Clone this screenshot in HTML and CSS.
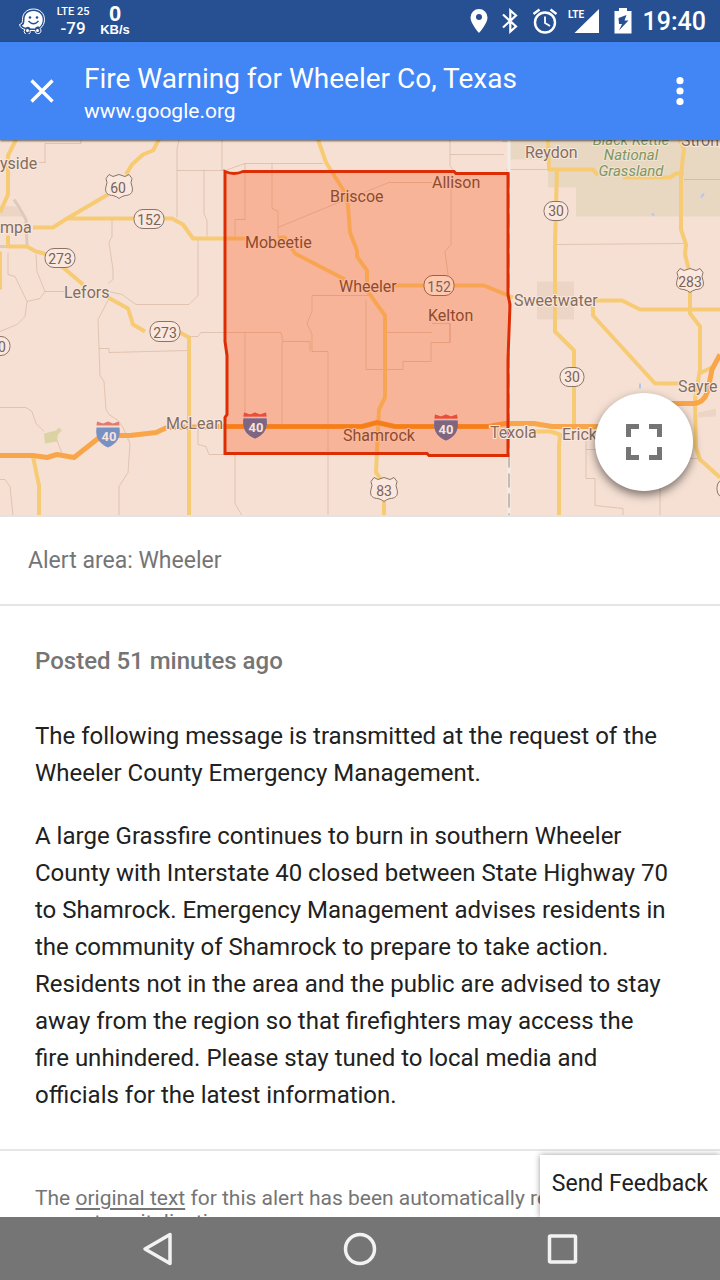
FILE: index.html
```html
<!DOCTYPE html>
<html lang="en">
<head>
<meta charset="utf-8">
<meta name="viewport" content="width=device-width, initial-scale=1">
<title>Fire Warning for Wheeler Co, Texas</title>
<link rel="stylesheet" href="styles.css">
</head>
<body>
<div class="status">
  <svg class="waze" viewBox="0 0 28 26" width="28" height="26">
    <path d="M15.500 1C8.500 1 4.500 5.500 4.500 11.500C4.500 14.500 4 16 1.500 16.500C2 19.500 4.500 21 7 21.500A3 3 0 1 0 12 22.500H17A3 3 0 1 0 22 20.500C25 18.500 26.500 15 26.500 11.500C26.500 5.500 22 1 15.500 1Z" fill="none" stroke="#fff" stroke-width="1"/>
    <path d="M15.500 3C9.500 3 6.500 7 6.500 11.500C6.500 15 6 17 4 17.500C5 19 6.500 19.500 8 19.500C10 18 11.500 19 12.500 20.500H17C18 18.500 20 18 21.500 19C23.500 17.500 24.700 14.500 24.700 11.500C24.700 7 21 3 15.500 3Z" fill="#fff"/>
    <circle cx="12" cy="9.500" r="1.300" fill="#265092"/><circle cx="19" cy="9.500" r="1.300" fill="#265092"/>
    <path d="M10.500 13Q15.500 18.500 20.500 13" fill="none" stroke="#265092" stroke-width="1.400"/>
    <circle cx="9.500" cy="22.500" r="1.500" fill="#fff"/><circle cx="19.500" cy="22.500" r="1.500" fill="#fff"/>
  </svg>
  <div class="signal"><span>LTE 25</span><b>-79</b></div>
  <div class="speed"><span>0</span><b>KB/s</b></div>
  <div class="status-icons">
    <svg viewBox="0 0 18 26" width="18" height="26"><path d="M9 1A8.500 8.500 0 0 0 .5 9.500C.5 15.500 9 25 9 25S17.500 15.500 17.500 9.500A8.500 8.500 0 0 0 9 1Z" fill="#fff"/><circle cx="9" cy="9" r="3" fill="#265092"/></svg>
    <svg viewBox="0 0 16 26" width="16" height="26"><path d="M1 6.500L14 18.500L8.300 23.500V2.500L14 7.500L1 19.500" fill="none" stroke="#fff" stroke-width="2.200"/></svg>
    <svg viewBox="0 0 26 26" width="26" height="26"><circle cx="13" cy="14.500" r="10" fill="none" stroke="#fff" stroke-width="2.400"/><path d="M13 8.500V15L18 18" fill="none" stroke="#fff" stroke-width="1.800"/><path d="M1.500 6L7.500 1.500M18.500 1.500L24.500 6" stroke="#fff" stroke-width="2.400"/></svg>
    <svg class="cell" viewBox="0 0 32 26" width="32" height="26"><path d="M31 1V25H6.500Z" fill="#fff"/><text x="0" y="10" class="lte">LTE</text></svg>
    <svg viewBox="0 0 18 26" width="18" height="26"><path d="M5 0H13V3H17.500V25.500H.5V3H5Z" fill="#fff"/><path d="M12.500 7L4.500 10L5 16H8L5 22.500L14.500 12.500H10.500Z" fill="#265092"/></svg>
  </div>
  <time class="clock">19:40</time>
</div>
<header class="bar">
  <button class="icon-button close" aria-label="Close"><svg viewBox="0 0 24 24" width="24" height="24"><path d="M1.500 1.500L22.500 22.500M22.500 1.500L1.500 22.500" stroke="#fff" stroke-width="3.400"/></svg></button>
  <div class="heading"><h1>Fire Warning for Wheeler Co, Texas</h1><p>www.google.org</p></div>
  <button class="icon-button more" aria-label="More options"><svg viewBox="0 0 8 28" width="8" height="28"><g fill="#fff"><circle cx="4" cy="3.700" r="3.600"/><circle cx="4" cy="14" r="3.600"/><circle cx="4" cy="24.500" r="3.600"/></g></svg></button>
</header>
<main class="page">
  <section class="map">
    <svg class="map-art" viewBox="0 140 720 376" preserveAspectRatio="xMidYMid slice" role="img" aria-label="Map of Wheeler County">
      <defs>
        <g id="interstate"><path d="M-11.500-7H11.500C13 3 9 9 0 13C-9 9-13 3-11.500-7Z" fill="#7890c2"/><path d="M-11-13L-5-11L0-13L5-11L11-13L11.500-9H-11.500Z" fill="#e5796f"/></g>
        <path id="us" d="M-10-12L-6-10L0-12L6-10L10-12L13-8Q11-4 13 0C15 7 10 9 6 9Q2 10 0 12Q-2 10-6 9C-10 9-15 7-13 0Q-11-4-13-8Z"/>
      </defs>
      <rect y="140" width="720" height="376" fill="#f6e0d4"/>
      <path d="M509 140H720V217H576V188H548V160H509Z" fill="#e8d8c2"/>
      <path d="M537 282H574V320H537ZM698 413L716 409V417L698 418ZM0 206L16 207L23 217H0Z" fill="#ecd5c5"/>
      <path d="M44 434L56 431L59 428L62 431L58 435L57 442L45 444Z" fill="#dcd3a5"/>
      <path d="M701 198L704 194M652 214L654 216M640 384V389" stroke="#b0c8ec" stroke-width="2"/>
      <g class="minor">
        <path d="M39 163H45V144H81V140M179 140L177 150V218M177 171H225M204 171V214L207 221V237M198 240V296L189 305H136L122 295L109 292M112 219V237L109 243L113 270V280L108 284M108 301L98 320L100 376L104 382L106 410L109 415L118 421L123 428L130 444L128 473L119 487V516M99 349H109V353L188 351M188 337H198L201 333H225M0 408H26L32 412L36 424L44 432M57 441L62 454M0 480H5L10 487L13 516M8 253V275L15 277L27 302L25 317L17 325L0 332M36 255L37 272L45 292H68M27 302L40 299L45 292M198 430V445L206 447L209 455H235V504L242 516M222 140V171"/>
        <path d="M225 171L245 164H323M245 164V220H235V237M272 164V209L278 212V237M278 228L336 204L389 183H432M450 140V166L454 172M450 155H504M451 190V245L445 252L448 275M312 296H372M312 296V312L307 324L312 335V352H328V362V516M225 333H281L283 342H310V352M245 333V420M282 342L282 430M366 300V370H403V362H431V343H450V324H432M386 333H432M450 324V343M509 142H502M506 170H548M556 245L684 244M684 180H720M586 440V479H595V506L623 509V516M660 485V516M586 450H610M690 459H700"/>
      </g>
      <path d="M0 247H27V245L26 220L18 206L14 200" class="ring"/>
      <path d="M509 140V516" class="state-gap"/><path d="M509 174V516" class="state"/>
      <g class="road">
        <path d="M16 140L8 156V195L0 213M33 228H53L67 219L108 195M67 219H172L183 225L193 239H245M126 175L132 165L143 155L153 151L159 140M8 236V247H27L36 252L48 255L83 285M108 298L128 309L133 325L145 332M180 333L189 338V516M33 457L39 486V516M0 252V290"/>
        <path d="M318 140L326 163L343 190L348 206L350 233L357 251V257L367 271V291L385 316V398L379 410L376 473L384 484V516M278 238H285L295 254L345 280M392 286H484L513 298M548 140L549 170H593L598 176M557 170L555 245V332L574 351V427M595 301H622L640 310H720M593 301V316L655 384H680M679 140L684 149L681 174L681 230L686 245L685 255L690 275V314L700 327V370L695 400L696 448L700 460L720 478M623 178H670L676 174H684M530 432H550L560 435L559 447V516M699 374L712 368"/>
      </g>
      <path class="highway" d="M0 456H33L47 458L57 455L74 458L98 439L118 436H130L156 433L167 428L225 427H362L377 423L395 427H488L505 424H534L552 427H600M665 404H694Q705 403 708 390L712 370L720 355"/>
      <path d="M225 172Q234 176 243 172H454L456 174L508 174V295L510 305L508 360V456H429L427 454H225V418L227 415V356L225 342Z" fill="#ff4500" fill-opacity=".28" stroke="#dd2d05" stroke-width="3"/>
      <path class="highway deep" d="M227 427H362L377 423L395 427H488"/>
      <g class="label">
        <text x="0" y="169">yside</text><text x="0" y="233">mpa</text><text x="64" y="298">Lefors</text><text x="166" y="429">McLean</text><text x="525" y="158">Reydon</text><text x="514" y="306">Sweetwater</text><text x="490" y="438">Texola</text><text x="562" y="440">Erick</text><text x="678" y="392">Sayre</text><text x="681" y="146">Strong</text>
      </g>
      <g class="label inside">
        <text x="330" y="202">Briscoe</text><text x="432" y="188">Allison</text><text x="245" y="248">Mobeetie</text><text x="339" y="292">Wheeler</text><text x="428" y="321">Kelton</text><text x="343" y="441">Shamrock</text>
      </g>
      <g class="park"><text x="631" y="145">Black Kettle</text><text x="631" y="160">National</text><text x="631" y="176">Grassland</text></g>
      <g class="shield"><rect x="134" y="210" width="30" height="19" rx="9"/><rect x="45" y="249" width="30" height="19" rx="9"/><rect x="150" y="322" width="30" height="20" rx="9"/><rect x="544" y="202" width="24" height="19" rx="9"/><rect x="560" y="368" width="24" height="19" rx="9"/><rect x="-14" y="337" width="24" height="19" rx="9"/><rect x="717" y="479" width="24" height="20" rx="9"/><use href="#us" x="119" y="187"/><use href="#us" x="384" y="490"/><use href="#us" x="690" y="281"/></g>
      <rect x="424" y="276" width="30" height="20" rx="9" fill="#ffc9b0" stroke="#a75e40"/>
      <g class="route"><text x="118" y="193">60</text><text x="149" y="225">152</text><text x="60" y="264">273</text><text x="165" y="338">273</text><text x="556" y="216">30</text><text x="572" y="382">30</text><text x="2" y="352">0</text><text x="384" y="496">83</text><text x="690" y="287">283</text><text x="439" y="292">152</text></g>
      <use href="#interstate" x="108" y="435"/><use href="#interstate" x="255" y="426"/><use href="#interstate" x="446" y="428"/>
      <path d="M243.500 419H266.500C268 429 264 435 255 439C246 435 242 429 243.500 419ZM434.500 421H457.500C459 431 455 437 446 441C437 437 433 431 434.500 421Z" fill="#806580"/>
      <path d="M244 413L250 415L255 413L260 415L266 413L266.500 417H243.500ZM435 415L441 417L446 415L451 417L457 415L457.500 419H434.500Z" fill="#ea4f3a"/>
      <g class="interstate-number"><text x="109" y="441">40</text><text x="256" y="432">40</text><text x="446" y="434">40</text></g>
    </svg>
    <button class="expand" aria-label="Expand map"><svg viewBox="0 0 36 36" width="36" height="36"><path d="M2.500 13V2.500H13M23 2.500H33.500V13M33.500 23V33.500H23M13 33.500H2.500V23" fill="none" stroke="#757575" stroke-width="5"/></svg></button>
  </section>
  <p class="area">Alert area: Wheeler</p>
  <article class="message">
    <h2>Posted 51 minutes ago</h2>
    <p>The following message is transmitted at the request of the Wheeler County Emergency Management.</p>
    <p>A large Grassfire continues to burn in southern Wheeler County with Interstate 40 closed between State Highway 70 to Shamrock. Emergency Management advises residents in the community of Shamrock to prepare to take action. Residents not in the area and the public are advised to stay away from the region so that firefighters may access the fire unhindered. Please stay tuned to local media and officials for the latest information.</p>
  </article>
  <p class="note">The <a href="#original">original text</a> for this alert has been automatically reformatted to correct capitalization.</p>
  <button class="feedback">Send Feedback</button>
</main>
<nav class="system">
  <button aria-label="Back"><svg viewBox="0 0 36 36" width="36" height="36"><path d="M30 3.500V32.500L5 18Z" fill="none" stroke="#f2f2f2" stroke-width="3.500" stroke-linejoin="round"/></svg></button>
  <button aria-label="Home"><svg viewBox="0 0 36 36" width="36" height="36"><circle cx="18" cy="18" r="14.500" fill="none" stroke="#f2f2f2" stroke-width="3.500"/></svg></button>
  <button aria-label="Recent apps"><svg viewBox="0 0 36 36" width="36" height="36"><rect x="5.500" y="5" width="26" height="26" rx="1" fill="none" stroke="#f2f2f2" stroke-width="3.500"/></svg></button>
</nav>
</body>
</html>
```
FILE: styles.css
```css
* { box-sizing: border-box; }
body {
  margin: 0;
  height: 100vh;
  display: flex;
  flex-direction: column;
  overflow: hidden;
  font-family: Roboto, "Liberation Sans", sans-serif;
  color: #212121;
  background: #fff;
}
h1, h2, p { margin: 0; font-weight: 400; }
svg { display: block; flex: none; }
button { border: 0; padding: 0; background: none; font: inherit; color: inherit; }

.status {
  flex: none;
  height: 42px;
  display: flex;
  align-items: center;
  padding: 0 14px 0 18px;
  background: #265092;
  color: #fff;
}
.signal, .speed { display: flex; flex-direction: column; align-items: center; }
.signal { width: 30px; margin-left: 12px; }
.signal span { font-size: 11px; line-height: 14px; font-weight: 500; white-space: nowrap; }
.signal b { font-size: 17px; line-height: 18px; font-weight: 500; }
.speed { width: 30px; margin-left: 12px; font-family: "Liberation Sans", sans-serif; }
.speed span { font-size: 22px; line-height: 18px; font-weight: 700; }
.speed b { font-size: 13px; line-height: 14px; }
.status-icons { margin-left: auto; display: flex; align-items: center; gap: 14px; }
.cell { margin-left: -4px; }
.lte { font: 700 10px Roboto, sans-serif; fill: #fff; }
.clock { margin-left: 11px; font-size: 25px; font-weight: 500; }

.bar {
  flex: none;
  height: 98px;
  display: flex;
  align-items: center;
  padding: 0 28px 0 30px;
  background: #4285f4;
  color: #fff;
  position: relative;
  box-shadow: 0 1px 2px rgba(0, 0, 0, .6);
  z-index: 1;
}
.heading { flex: 1; margin-left: 30px; padding-top: 6px; }
.heading h1 { font-size: 28px; line-height: 34px; }
.heading p { font-size: 21px; line-height: 30px; }
.icon-button { display: grid; place-items: center; }
.more { width: 24px; height: 48px; }

.page { flex: 1; min-height: 0; overflow: hidden; position: relative; }
.map { position: relative; height: 377px; border-bottom: 2px solid #e3e3e3; }
.map-art { width: 100%; height: 100%; }
.map-art text { font-family: Roboto, sans-serif; }
.map-art .lte { font-size: 10px; }
.minor { fill: none; stroke: #b0805e; stroke-opacity: .3; stroke-width: 1; }
.ring { fill: none; stroke: #dfc9ba; stroke-width: 3; }
.state-gap { stroke: #f3ebe7; stroke-width: 3; }
.state { stroke: #c4bab6; stroke-width: 2; stroke-dasharray: 14 6; }
.road { fill: none; stroke: #f6cb74; stroke-width: 4; stroke-linejoin: round; }
.highway { fill: none; stroke: #f9a64a; stroke-width: 5; stroke-linejoin: round; }
.highway.deep { stroke: #f57f17; stroke-width: 4; }
.label { font-size: 16px; fill: #856c5c; stroke: #f8e8de; stroke-width: 2; paint-order: stroke; }
.label.inside { fill: #8f4a2c; stroke: #f9b89c; }
.park { font-size: 15px; font-style: italic; text-anchor: middle; fill: #80955f; stroke: #f0e4d2; stroke-width: 2; paint-order: stroke; }
.shield { fill: #fae8de; stroke: #8a7468; stroke-width: 1; }
.route { font-size: 14px; text-anchor: middle; fill: #7b6257; }
.interstate-number { font-size: 13px; font-weight: 700; text-anchor: middle; fill: #f7e3dc; }
.expand {
  position: absolute;
  right: 27px;
  bottom: 24px;
  width: 98px;
  height: 98px;
  display: grid;
  place-items: center;
  border-radius: 50%;
  background: #fff;
  box-shadow: 0 4px 10px rgba(0, 0, 0, .5);
}

.area { padding: 27px 28px; font-size: 23px; line-height: 33px; color: #757575; border-bottom: 2px solid #e6e6e6; }
.message { padding: 37px 49px 35px 35px; border-bottom: 2px solid #e6e6e6; font-size: 24px; line-height: 37px; }
.message h2 { font-size: 24px; line-height: 37px; font-weight: 500; color: #757575; margin-bottom: 38px; }
.message p + p { margin-top: 26px; }
.note { padding: 35px 35px 0; font-size: 21px; line-height: 24px; color: #757575; }
.note a { color: inherit; text-underline-offset: 3px; }
.feedback {
  position: absolute;
  right: 0;
  bottom: 0;
  padding: 8px 12px 13px;
  font-size: 23px;
  line-height: 41px;
  background: #fff;
  box-shadow: 0 0 6px rgba(0, 0, 0, .4);
}
.system {
  flex: none;
  height: 63px;
  display: flex;
  justify-content: center;
  align-items: center;
  gap: 166px;
  background: #757575;
  position: relative;
}
```
